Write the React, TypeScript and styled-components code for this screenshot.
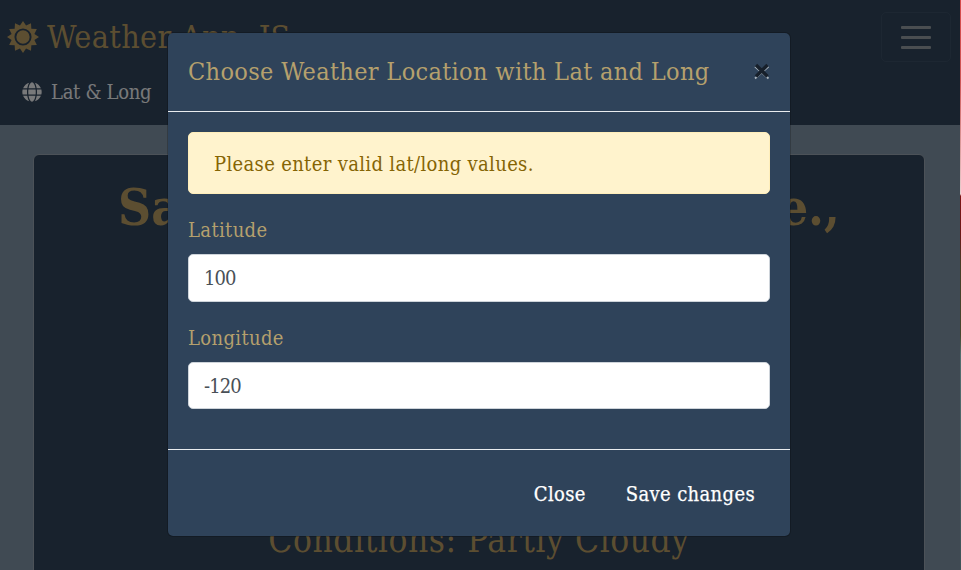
import React from "react";
import styled, { createGlobalStyle } from "styled-components";
import { FaGlobe } from "react-icons/fa";

const GlobalStyle = createGlobalStyle`
  *, *::before, *::after { box-sizing: border-box; }
  body {
    margin: 0;
    overflow: hidden;
    background: #8094a6;
    font-family: "Roboto Slab", "DejaVu Serif Condensed", "DejaVu Serif", serif;
    font-stretch: condensed;
    font-size: 20px;
    line-height: 1.5;
  }
`;

const gold = "#b5a06d";
const navy = "#2f435a";

const Page = styled.div`
  position: relative;
  width: 100vw;
  height: 100vh;
  overflow: hidden;
`;

const Navbar = styled.header`
  display: grid;
  grid-template-columns: 1fr auto;
  align-items: start;
  height: 125px;
  padding: 12px 10px 0 7px;
  background: #30445a;
`;

const Brand = styled.div`
  display: flex;
  align-items: center;
  gap: 8px;
  height: 50px;
  color: #b99c62;
  font-size: 32px;
  letter-spacing: 0.35px;
  white-space: nowrap;
`;

const NavLink = styled.a`
  grid-column: 1 / -1;
  display: flex;
  align-items: center;
  gap: 9px;
  height: 30px;
  margin: -7px 0 0 15px;
  padding-top: 4px;
  color: #f0f2f4;
  letter-spacing: -0.3px;
`;

const Toggler = styled.button`
  display: flex;
  flex-direction: column;
  justify-content: center;
  align-items: center;
  gap: 7px;
  width: 70px;
  height: 50px;
  padding: 0;
  border: 1px solid #3b4f64;
  border-radius: 5px;
  background: none;
`;

const Bar = styled.span`
  width: 30px;
  height: 3px;
  border-radius: 1px;
  background: #949ca2;
`;

const WeatherCard = styled.main`
  display: flex;
  flex-direction: column;
  align-items: center;
  justify-content: space-between;
  width: 892px;
  height: 440px;
  margin: 29px 0 0 33px;
  padding: 14px 0 32px;
  border: 1px solid #98a5b0;
  border-radius: 6px;
  background: #30445a;
  color: #b99c62;
  white-space: nowrap;
`;

const Place = styled.h1`
  display: flex;
  justify-content: space-between;
  width: 722px;
  margin: 0;
  font-size: 51px;
  line-height: 76px;
  font-weight: 700;
`;

const Conditions = styled.p`
  margin: 0;
  font-size: 35px;
  line-height: 42px;
  letter-spacing: 0.55px;
`;

const Backdrop = styled.div`
  position: absolute;
  inset: 0 1px 0 0;
  background: rgba(0, 0, 0, 0.5);
`;

const WindowEdge = styled.div`
  position: absolute;
  inset: 0 0 0 auto;
  width: 1px;
  background: linear-gradient(#d64a4a, #cd5555 80px, #e6d0d0 194px, #7d1515 196px, #6b1717 235px, #453e27 265px, #45472f 335px, #536f70 355px, #3f5358 570px);
`;

const Modal = styled.section`
  position: absolute;
  top: 32px;
  left: 167px;
  width: 624px;
  height: 505px;
  border: 1px solid rgba(0, 0, 0, 0.2);
  border-radius: 6px;
  background: ${navy};
  background-clip: padding-box;
`;

const ModalHeader = styled.div`
  display: flex;
  justify-content: space-between;
  align-items: center;
  height: 79px;
  padding: 0 19px 0 20px;
  border-bottom: 1px solid #e9ecef;
`;

const ModalTitle = styled.h5`
  margin: 0;
  color: ${gold};
  font-size: 25px;
  font-weight: 400;
  letter-spacing: 0.34px;
  white-space: nowrap;
`;

const CloseIcon = styled.button`
  display: flex;
  margin-top: -3px;
  padding: 0;
  border: 0;
  background: none;
`;

const ModalBody = styled.form`
  height: 337px;
  padding: 20px;
`;

const Alert = styled.div`
  height: 62px;
  padding: 16px 25px 14px;
  border: 1px solid #ffeeba;
  border-radius: 5px;
  background: #fff3cd;
  color: #856404;
  letter-spacing: 0.34px;
`;

const Field = styled.label<{ $top: number }>`
  display: block;
  margin-top: ${({ $top }) => $top}px;
  color: ${gold};
  letter-spacing: 0.35px;
`;

const Input = styled.input`
  display: block;
  width: 100%;
  height: 47.5px;
  margin-top: 9px;
  padding: 1px 15px 0;
  border: 1px solid #ced4da;
  border-radius: 5px;
  background: #fff;
  color: #495057;
  font: inherit;
  letter-spacing: -0.9px;
  outline: none;
`;

const ModalFooter = styled.div`
  display: flex;
  justify-content: flex-end;
  align-items: center;
  gap: 10px;
  height: 87px;
  padding: 2px 20px 0;
  border-top: 1px solid #e9ecef;
`;

const Button = styled.button`
  height: 47px;
  padding: 0 15px;
  border: 0;
  background: none;
  color: #fff;
  font: inherit;
  letter-spacing: 0.35px;
  -webkit-text-stroke: 0.25px #fff;
`;

const rays = Array.from({ length: 24 }, (_, i) => {
  const r = i % 2 === 0 ? 16 : 11.8;
  const a = (i * Math.PI) / 12;
  return `${(16 + r * Math.sin(a)).toFixed(2)},${(16 - r * Math.cos(a)).toFixed(2)}`;
}).join(" ");

function SunIcon() {
  return (
    <svg width="32" height="32" viewBox="0 0 32 32" fill="currentColor">
      <polygon points={rays} />
      <circle cx="16" cy="16" r="7.6" stroke="#30445a" strokeWidth="1.9" />
    </svg>
  );
}

export default function App() {
  return (
    <Page>
      <GlobalStyle />
      <Navbar>
        <Brand>
          <SunIcon />
          <span>Weather App. JS</span>
        </Brand>
        <Toggler aria-label="Toggle navigation">
          <Bar />
          <Bar />
          <Bar />
        </Toggler>
        <NavLink>
          <FaGlobe size={20} />
          <span>Lat &amp; Long</span>
        </NavLink>
      </Navbar>
      <WeatherCard>
        <Place>
          <span>San</span>
          <span>Francisco,</span>
          <span>Ave.,</span>
        </Place>
        <Conditions>Conditions: Partly Cloudy</Conditions>
      </WeatherCard>
      <Backdrop />
      <WindowEdge />
      <Modal role="dialog">
        <ModalHeader>
          <ModalTitle>Choose Weather Location with Lat and Long</ModalTitle>
          <CloseIcon aria-label="Dismiss">
            <svg width="18" height="18" viewBox="0 0 18 18" fill="none">
              <path d="M2 4.5 15.5 16.5M15.5 4.5 2 16.5" stroke="#aab4bd" strokeWidth="1.8" />
              <path d="M3 3 14.5 14.5M14.5 3 3 14.5" stroke="#17202b" strokeWidth="3.4" />
            </svg>
          </CloseIcon>
        </ModalHeader>
        <ModalBody>
          <Alert>Please enter valid lat/long values.</Alert>
          <Field $top={21}>
            Latitude
            <Input defaultValue="100" />
          </Field>
          <Field $top={21}>
            Longitude
            <Input defaultValue="-120" />
          </Field>
        </ModalBody>
        <ModalFooter>
          <Button>Close</Button>
          <Button>Save changes</Button>
        </ModalFooter>
      </Modal>
    </Page>
  );
}
